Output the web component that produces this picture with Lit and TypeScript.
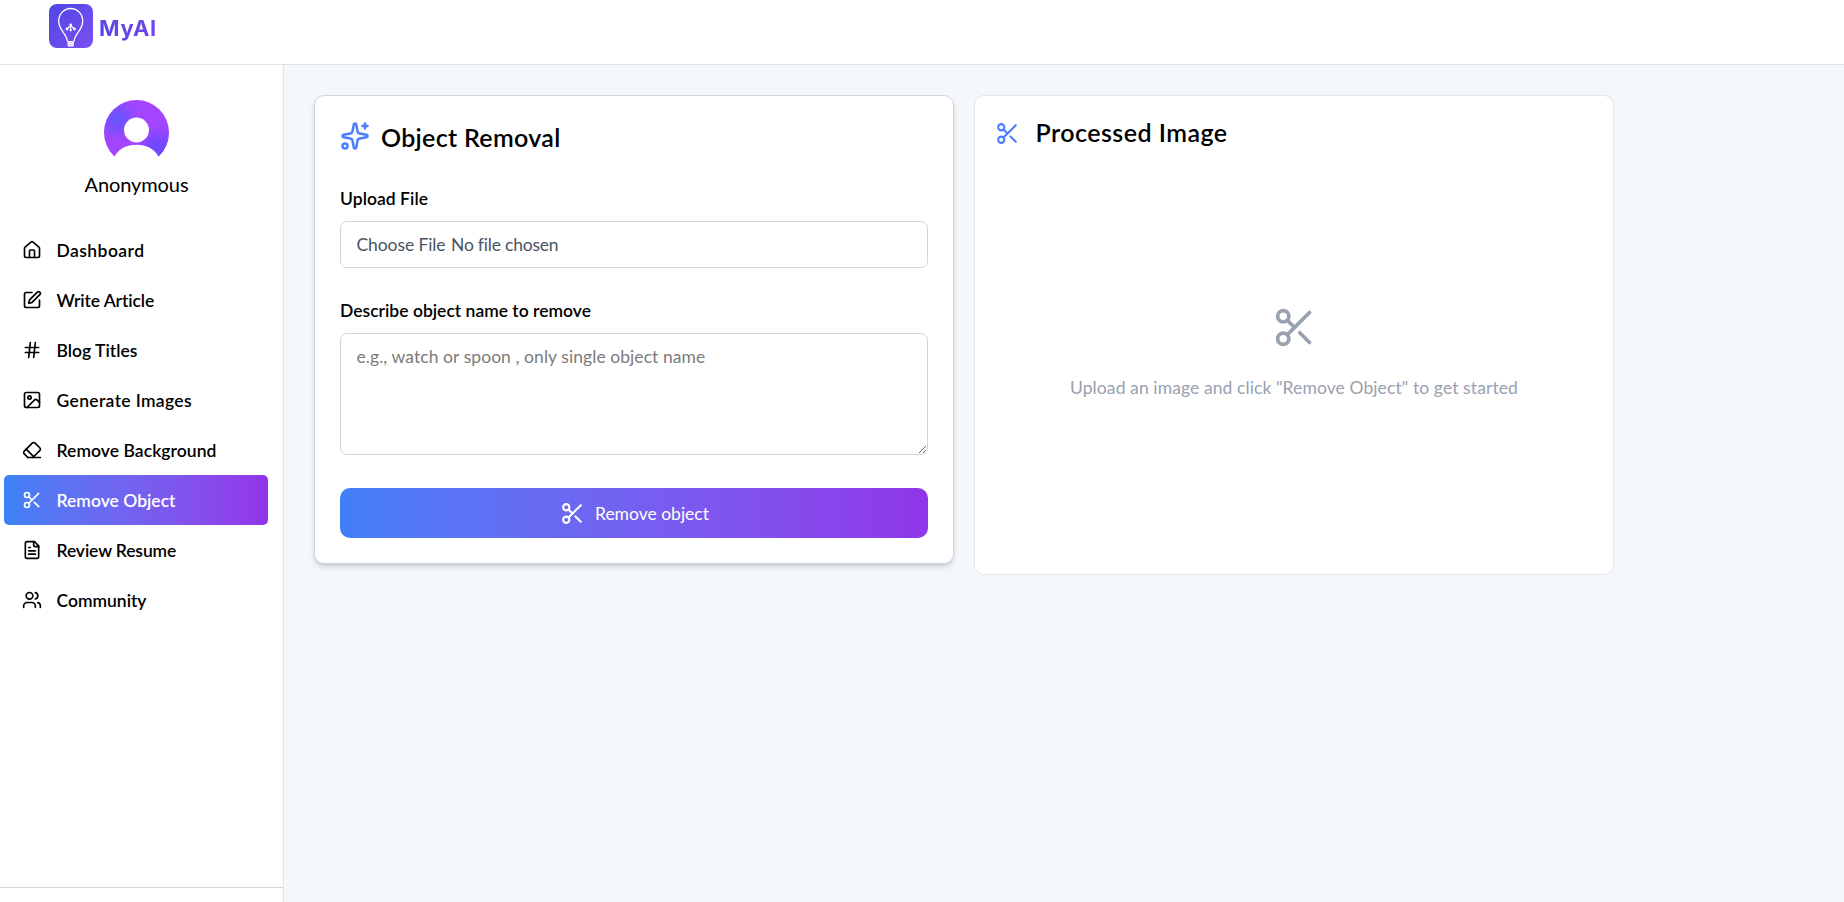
import { LitElement, html, css, svg } from "lit";
import { customElement, property } from "lit/decorators.js";

const FAMILY = 'Lato, "Open Sans", sans-serif';
const pen = document.createElement("canvas").getContext("2d")!;

/** Letter spacing that gives a run of text the requested advance width. */
function tracking(text: string, weight: number, size: number, width: number, family = FAMILY) {
  pen.font = `${weight} ${size}px ${family}`;
  return ((width - pen.measureText(text).width) / text.length).toFixed(3) + "px";
}

const ICONS: Record<string, unknown> = {
  house: svg`<path d="M15 21v-8a1 1 0 0 0-1-1h-4a1 1 0 0 0-1 1v8"/><path d="M3 10a2 2 0 0 1 .709-1.528l7-5.999a2 2 0 0 1 2.582 0l7 5.999A2 2 0 0 1 21 10v9a2 2 0 0 1-2 2H5a2 2 0 0 1-2-2z"/>`,
  pen: svg`<path d="M12 3H5a2 2 0 0 0-2 2v14a2 2 0 0 0 2 2h14a2 2 0 0 0 2-2v-7"/><path d="M18.375 2.625a1 1 0 0 1 3 3l-9.013 9.014a2 2 0 0 1-.853.505l-2.873.84a.5.5 0 0 1-.62-.62l.84-2.873a2 2 0 0 1 .506-.852z"/>`,
  hash: svg`<path d="M4 9h16M4 15h16M10 3 8 21M16 3l-2 18"/>`,
  image: svg`<rect width="18" height="18" x="3" y="3" rx="2"/><circle cx="9" cy="9" r="2"/><path d="m21 15-3.086-3.086a2 2 0 0 0-2.828 0L6 21"/>`,
  eraser: svg`<path d="m7 21-4.3-4.3c-1-1-1-2.5 0-3.4l9.6-9.6c1-1 2.5-1 3.4 0l5.6 5.6c1 1 1 2.5 0 3.4L13 21"/><path d="M22 21H7"/><path d="m5 11 9 9"/>`,
  scissors: svg`<circle cx="6" cy="6" r="3"/><path d="M8.12 8.12 12 12"/><path d="M20 4 8.12 15.88"/><circle cx="6" cy="18" r="3"/><path d="M14.8 14.8 20 20"/>`,
  file: svg`<path d="M15 2H6a2 2 0 0 0-2 2v16a2 2 0 0 0 2 2h12a2 2 0 0 0 2-2V7Z"/><path d="M14 2v4a2 2 0 0 0 2 2h4"/><path d="M10 9H8M16 13H8M16 17H8"/>`,
  users: svg`<path d="M16 21v-2a4 4 0 0 0-4-4H6a4 4 0 0 0-4 4v2"/><circle cx="9" cy="7" r="4"/><path d="M22 21v-2a4 4 0 0 0-3-3.87"/><path d="M16 3.13a4 4 0 0 1 0 7.75"/>`,
  sparkles: svg`<path d="M11.017 2.814a1 1 0 0 1 1.966 0l1.051 5.558a2 2 0 0 0 1.594 1.594l5.558 1.051a1 1 0 0 1 0 1.966l-5.558 1.051a2 2 0 0 0-1.594 1.594l-1.051 5.558a1 1 0 0 1-1.966 0l-1.051-5.558a2 2 0 0 0-1.594-1.594l-5.558-1.051a1 1 0 0 1 0-1.966l5.558-1.051a2 2 0 0 0 1.594-1.594z"/><path d="M20 2v4M22 4h-4"/><circle cx="4" cy="20" r="2"/>`,
};

@customElement("line-icon")
class LineIcon extends LitElement {
  @property() name = "";
  @property({ type: Number }) size = 20;
  static styles = css`
    :host { display: block; flex: none; line-height: 0; }
    .i { display: block; fill: none; stroke: currentColor; stroke-width: 2; stroke-linecap: round; stroke-linejoin: round; }
  `;
  render() {
    return html`<svg class="i" width=${this.size} height=${this.size} viewBox="0 0 24 24">${ICONS[this.name]}</svg>`;
  }
}

@customElement("fit-text")
class FitText extends LitElement {
  @property() text = "";
  @property({ type: Number }) weight = 400;
  @property({ type: Number }) size = 18;
  @property({ type: Number }) width = 0;
  static styles = css`
    :host { display: block; white-space: pre; }
  `;
  render() {
    return html`<span style="font-size:${this.size}px;font-weight:${this.weight};letter-spacing:${tracking(this.text, this.weight, this.size, this.width)}">${this.text}</span>`;
  }
}

const MENU: [string, string, number][] = [
  ["house", "Dashboard", 88],
  ["pen", "Write Article", 98.5],
  ["hash", "Blog Titles", 81.5],
  ["image", "Generate Images", 135.5],
  ["eraser", "Remove Background", 160],
  ["scissors", "Remove Object", 119],
  ["file", "Review Resume", 120],
  ["users", "Community", 90],
];

@customElement("side-bar")
class SideBar extends LitElement {
  static styles = css`
    :host { display: flex; flex-direction: column; box-sizing: border-box; width: 284px; background: #fff; border-right: 1px solid #e0e4ea; }
    .profile { display: flex; flex-direction: column; align-items: center; padding: 35px 10px 0 0; height: 160px; box-sizing: border-box; }
    .avatar { display: block; }
    .name { margin-top: 5px; line-height: 28px; }
    .menu { display: flex; flex-direction: column; padding: 0 15px 0 4px; flex: 1; }
    .item { display: flex; align-items: center; gap: 14.5px; height: 50px; padding-left: 18px; border-radius: 5px; color: #000; line-height: 24px; }
    .caption { padding-top: 2px; }
    .on { color: #fff; background: linear-gradient(to right in oklab, #3c81f6, #9234e9); }
    .foot { height: 14px; border-top: 1px solid #d1d5dc; }
  `;
  render() {
    return html`
      <div class="profile">
        <svg class="avatar" width="65" height="65" viewBox="0 0 65 65">
          <defs>
            <radialGradient id="a" cx=".2" cy=".29" r=".34"><stop offset="0" stop-color="#6257ff"/><stop offset="1" stop-color="#6257ff" stop-opacity="0"/></radialGradient>
            <radialGradient id="b" cx=".84" cy=".75" r=".36"><stop offset="0" stop-color="#7047ff"/><stop offset=".3" stop-color="#7047ff" stop-opacity=".9"/><stop offset="1" stop-color="#7047ff" stop-opacity="0"/></radialGradient>
          </defs>
          <circle cx="32.5" cy="32.5" r="32.5" fill="#a345ff"/>
          <circle cx="32.5" cy="32.5" r="32.5" fill="url(#a)"/>
          <circle cx="32.5" cy="32.5" r="32.5" fill="url(#b)"/>
          <circle cx="32.5" cy="30" r="12.5" fill="#fff"/>
          <path fill="#fff" d="M10.6 56.5C14.5 49 22.5 44.8 32.5 44.8S50.5 49 54.4 56.5L60 66H5Z"/>
        </svg>
        <fit-text class="name" text="Anonymous" size="20" width="104"></fit-text>
      </div>
      <nav class="menu">
        ${MENU.map(([icon, label, w]) => html`
          <div class="item ${label === "Remove Object" ? "on" : ""}">
            <line-icon name=${icon}></line-icon>
            <fit-text class="caption" text=${label} weight="600" size="17.5" width=${w}></fit-text>
          </div>`)}
      </nav>
      <div class="foot"></div>`;
  }
}

@customElement("app-root")
class AppRoot extends LitElement {
  static styles = css`
    :host { display: flex; flex-direction: column; height: 902px; overflow: hidden; font-family: Lato, "Open Sans", sans-serif; background: #f4f7fc; color: #000; }
    .top { display: flex; align-items: flex-start; gap: 6px; height: 65px; box-sizing: border-box; padding: 4px 0 0 49px; background: #fff; border-bottom: 1px solid #e0e4ea; }
    .logo { display: block; }
    .brand { padding-top: 4px; font: 700 22px/40px Inter, sans-serif; color: transparent; background: linear-gradient(to right, #5546e6, #7444ec); -webkit-background-clip: text; background-clip: text; }
    .body { display: flex; flex: 1; min-height: 0; }
    .main { display: flex; align-items: flex-start; gap: 20px; padding: 30px; }
    .card { box-sizing: border-box; width: 640px; background: #fff; border-radius: 10px; }
    .form { height: 469px; padding: 25px; border: 1px solid #d1d5dc; box-shadow: 0 4px 6px -1px rgba(0,0,0,.14), 0 2px 4px -2px rgba(0,0,0,.14); }
    .result { display: flex; flex-direction: column; height: 480px; padding: 20px; border: 1px solid #e3e6eb; }
    .head { display: flex; align-items: flex-start; gap: 11px; height: 60px; color: #4a7dff; }
    .title { margin-top: 2px; line-height: 29px; color: #000; }
    .label { line-height: 24px; }
    .first { margin-top: 6px; }
    .second { margin-top: 31px; }
    .file { display: flex; align-items: center; gap: 5.5px; box-sizing: border-box; height: 47px; margin-top: 10px; padding: 0 15.500px; border: 1px solid #d1d5dc; border-radius: 7px; color: #4a5565; line-height: 24px; }
    .area { display: block; box-sizing: border-box; width: 588px; height: 122px; margin: 10px 0 0; padding: 10px 15.5px; border: 1px solid #d1d5dc; border-radius: 7px; background: #fff; font: 400 17.5px/25px Lato, "Open Sans", sans-serif; outline: none; }
    .area::placeholder { color: #7b7b7b; }
    .button { display: flex; width: 100%; align-items: center; justify-content: center; gap: 10px; height: 50px; margin-top: 33px; padding: 0 0 0 1px; border: 0; border-radius: 10px; color: #fff; font: 400 17.5px/24px Lato, sans-serif; background: linear-gradient(to right in oklab, #407ff7, #9035e9); }
    .action { padding-top: 2px; }
    .rhead { display: flex; align-items: center; gap: 15.5px; height: 35px; color: #4a7dff; }
    .rtitle { line-height: 30px; color: #000; }
    .rhead, .head { flex: none; }
    .empty { display: flex; flex: 1; flex-direction: column; align-items: center; padding-top: 154px; gap: 25px; color: #99a1af; line-height: 26px; }
  `;
  render() {
    const hint = "e.g., watch or spoon , only single object name";
    return html`
      <header class="top">
        <svg class="logo" width="44" height="44" viewBox="0 0 44 44">
          <defs><linearGradient id="g" x1="0" y1="0" x2="1" y2="1"><stop stop-color="#4f46e5"/><stop offset="1" stop-color="#7c4ff0"/></linearGradient></defs>
          <rect width="44" height="44" rx="8" fill="url(#g)"/>
          <path d="M18.2 37C18.2 30 9.7 26.5 9.7 17A12 12.5 0 0 1 33.7 17C33.7 26.5 25.2 30 25.2 37" fill="none" stroke="#fff" stroke-width="1.3"/>
          <path d="M18.2 37h7l-.6 5.5h-5.8z" fill="#fff"/>
          <path d="M18.5 38.8h6.4M18.8 40.7h5.8" stroke="#a58cf5" stroke-width=".5"/>
          <path d="M21.7 21v6M21.7 21.5l-3.7 3.5M21.7 21.5l3.7 3.5" stroke="#fff" stroke-width="1.1"/>
          <g fill="#fff"><circle cx="21.7" cy="20.8" r="1.4"/><circle cx="18" cy="25" r="1.4"/><circle cx="25.4" cy="25" r="1.4"/><circle cx="21.7" cy="26.3" r="1.1"/></g>
        </svg>
        <div class="brand" style="letter-spacing:${tracking("MyAI", 700, 22, 58, "Inter")}">MyAI</div>
      </header>
      <div class="body">
        <side-bar></side-bar>
        <main class="main">
          <section class="card form">
            <div class="head">
              <line-icon name="sparkles" size="30"></line-icon>
              <fit-text class="title" text="Object Removal" weight="600" size="25" width="179.5"></fit-text>
            </div>
            <fit-text class="label first" text="Upload File" weight="600" size="17.5" width="88"></fit-text>
            <div class="file">
              <fit-text text="Choose File" size="17.5" width="89"></fit-text>
              <fit-text text="No file chosen" size="17.5" width="107"></fit-text>
            </div>
            <fit-text class="label second" text="Describe object name to remove" weight="600" size="17.5" width="251"></fit-text>
            <textarea class="area" placeholder=${hint} style="letter-spacing:${tracking(hint, 400, 17.5, 350)}"></textarea>
            <button class="button">
              <line-icon name="scissors" size="25"></line-icon>
              <fit-text class="action" text="Remove object" size="17.5" width="114"></fit-text>
            </button>
          </section>
          <section class="card result">
            <div class="rhead">
              <line-icon name="scissors" size="25"></line-icon>
              <fit-text class="rtitle" text="Processed Image" weight="600" size="25" width="192"></fit-text>
            </div>
            <div class="empty">
              <line-icon name="scissors" size="45"></line-icon>
              <fit-text text='Upload an image and click "Remove Object" to get started' size="17.5" width="448"></fit-text>
            </div>
          </section>
        </main>
      </div>`;
  }
}
